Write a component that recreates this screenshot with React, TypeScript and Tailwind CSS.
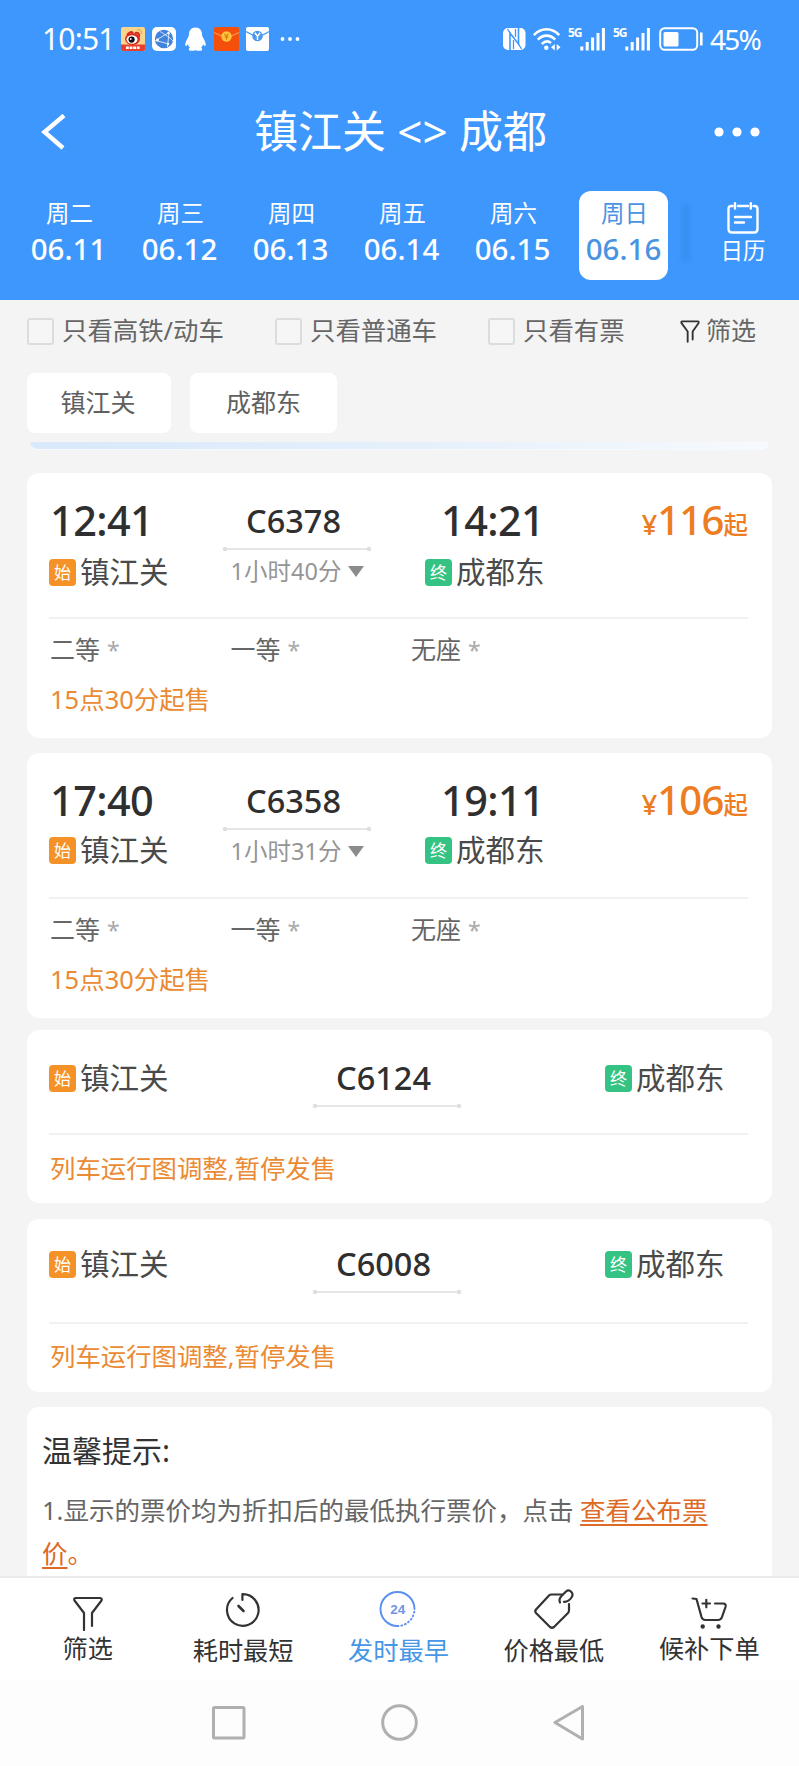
import type { ReactNode } from "react";

const days = [
  { week: "周二", date: "06.11" },
  { week: "周三", date: "06.12" },
  { week: "周四", date: "06.13" },
  { week: "周五", date: "06.14" },
  { week: "周六", date: "06.15" },
  { week: "周日", date: "06.16", active: true },
];

const trains = [
  { code: "C6378", depart: "12:41", arrive: "14:21", duration: "1小时40分", price: 116, gap: "mt-[15px]" },
  { code: "C6358", depart: "17:40", arrive: "19:11", duration: "1小时31分", price: 106, gap: "mt-[13px]" },
];

const seats = ["二等", "一等", "无座"];

function StatusBar() {
  return (
    <div className="flex h-[78px] items-center pl-[42px] pr-[39px]">
      <span className="w-[79px] text-[30px] leading-[40px] tracking-[-0.8px]">10:51</span>
      <svg width="24" height="24" viewBox="0 0 24 24">
        <rect width="24" height="24" rx="2" fill="#f8d58c" />
        <path d="M0 17.5h24V22a2 2 0 0 1-2 2H2a2 2 0 0 1-2-2z" fill="#e8402c" />
        <ellipse cx="11.5" cy="12" rx="7.5" ry="6" fill="#d9281e" />
        <path d="M6 8c2-3 5-4 6-2M14 6c3-1 5 1 4 4" stroke="#d9281e" strokeWidth="2" fill="none" />
        <ellipse cx="11" cy="12.5" rx="5.5" ry="4.2" fill="#fff" />
        <circle cx="10.6" cy="12.6" r="3.1" fill="#111" />
        <circle cx="9.8" cy="12" r="0.9" fill="#fff" />
        <path d="M16 3c3-1 5 1 4.5 4" stroke="#e8b04a" strokeWidth="1.2" fill="none" />
        <path d="M5 20.8h14" stroke="#fff" strokeWidth="2.4" strokeDasharray="2.8 .8" />
      </svg>
      <svg className="ml-[7px]" width="24" height="24" viewBox="0 0 24 24">
        <rect width="24" height="24" rx="5" fill="#fff" />
        <circle cx="12" cy="12" r="9.2" fill="#4284dc" />
        <path d="M3.5 13.5 17 5.5 15.5 20M3.5 13.5 17 17M8 4.5C12 7 19 11 21 14" stroke="#d4e6fc" strokeWidth="1" fill="none" />
        <circle cx="5.5" cy="13" r="1.4" fill="#fff" />
        <circle cx="16.5" cy="6" r="1.2" fill="#fff" />
        <circle cx="16" cy="17" r="1.2" fill="#fff" />
      </svg>
      <svg className="ml-[9px]" width="21" height="24" viewBox="0 0 21 24" fill="#fff">
        <path d="M10.5.5C6 .5 3.7 4 3.9 8.5 3.5 10.5.3 14 .3 18c0 1.6 1.2 1.2 2.7-.8.3 1.7 1 2.7 2 3.6-1.5.6-1.8 2.7.3 2.9 2 .2 4 0 5.2-.8 1.2.8 3.2 1 5.2.8 2.1-.2 1.8-2.3.3-2.9 1-.9 1.7-1.9 2-3.6 1.5 2 2.700 2.400 2.700.8 0-4-3.200-7.500-3.600-9.500C17.300 4 15 .5 10.500.5Z" />
      </svg>
      <svg className="ml-[8px]" width="25" height="24" viewBox="0 0 25 24">
        <rect width="25" height="24" rx="1.5" fill="#f4500c" />
        <path d="M0 5.5Q12.5 13 25 5.5" stroke="#f7954a" strokeWidth="1.2" fill="none" />
        <circle cx="12.5" cy="9.5" r="5.2" fill="#fdc33c" />
        <path d="m10.5 6.8 2 2.7 2-2.7M12.5 9.5v3.3M10.7 10.3h3.6" stroke="#d97a12" strokeWidth="1.1" fill="none" />
      </svg>
      <svg className="ml-[7px]" width="23" height="24" viewBox="0 0 23 24">
        <rect width="23" height="24" rx="2" fill="#fff" />
        <path d="M0 4.5Q11.5 12.5 23 4.5" stroke="#3d97fd" strokeWidth="1.3" fill="none" />
        <circle cx="11.5" cy="9" r="5.3" fill="#4b98ee" />
        <path d="m8.8 5.8 2.7 3.4 2.7-3.4M11.5 9.2v3.8" stroke="#fff" strokeWidth="1.5" fill="none" />
      </svg>
      <svg className="ml-[11px]" width="20" height="6" viewBox="0 0 20 6" fill="#fff">
        <circle cx="2.5" cy="3" r="1.9" />
        <circle cx="10" cy="3" r="1.9" />
        <circle cx="17.5" cy="3" r="1.9" />
      </svg>

      <div className="ml-auto flex items-center">
        <svg width="23" height="24" viewBox="0 0 23 24">
          <rect y="1" width="22.5" height="22" rx="5" fill="#fff" />
          <path d="M7 23V6L15.500 17V1" stroke="#3d97fd" strokeWidth="1.6" fill="none" />
          <path d="M7 6 4.500 2M15.500 17l3 5M10.500 22v-9M12.500 2v8" stroke="#3d97fd" strokeWidth="1.3" fill="none" />
        </svg>
        <svg className="ml-[7px]" width="28" height="24" viewBox="0 0 28 24" fill="none" stroke="#fff" strokeWidth="2.6">
          <path d="M.8 8.2C8 .3 19 .3 26.2 8.2M4.8 12.6C10 7.3 17 7.3 22.2 12.6M8.800 17C12 14 15.500 14 18 16" />
          <circle cx="13.3" cy="20.8" r="2.2" fill="#fff" stroke="none" />
          <path d="m21.8 17-3.8 3.2 3.8 3.2zM23.7 17l3.8 3.2-3.8 3.2z" fill="#fff" stroke="none" />
        </svg>
        <Signal />
        <Signal />
        <svg className="ml-[8px]" width="45" height="25" viewBox="0 0 45 25">
          <rect x="1.2" y="1.2" width="37" height="21.6" rx="4.5" fill="none" stroke="#fff" strokeWidth="2" />
          <rect x="4.5" y="5" width="15" height="14.5" rx="1.5" fill="#fff" />
          <path d="M42.3 5.5v13" stroke="#fff" strokeWidth="2.6" />
        </svg>
        <span className="ml-[6px] w-[50px] whitespace-nowrap text-[28px] leading-[40px] tracking-[-1.8px]">45%</span>
      </div>
    </div>
  );
}

function Signal() {
  return (
    <div className="ml-[7px] flex h-[24px] items-start">
      <span className="w-[12px] text-[12px] font-bold leading-[11px] tracking-[-1px]">5G</span>
      <svg width="26" height="24" viewBox="0 0 26 24" stroke="#fff" strokeWidth="3">
        <path d="M1.8 19.5V23.5M7.2 15V23.5M12.6 10.5V23.5M18 6V23.5M23.4 1V23.5" />
      </svg>
    </div>
  );
}

function Funnel({ className }: { className?: string }) {
  return (
    <svg className={className} viewBox="0 0 30 34" fill="none" stroke="currentColor" strokeLinecap="round" strokeLinejoin="round">
      <path d="M11.5 32.5V17L2.3 4.5Q1 2 3.5 1.8H26.5Q29 2 27.7 4.5L19 17V29" />
    </svg>
  );
}

function Checkbox({ label, className }: { label: string; className?: string }) {
  return (
    <label className={`flex items-center ${className}`}>
      <span className="size-[27px] rounded-[3px] border-2 border-[#dcdcdc] bg-[#f6f6f6]" />
      <span className="mb-[2px] ml-[8px] text-[25.4px] leading-[30px]">{label}</span>
    </label>
  );
}

function Station({ type, name }: { type: "始" | "终"; name: string }) {
  return (
    <div className="flex h-[28px] items-center whitespace-nowrap text-[29.5px] leading-[28px] text-[#4a4a4a]">
      <span className={`mr-[4px] flex size-[27px] items-center justify-center rounded-[4px] text-[17px] leading-none text-white ${type === "始" ? "bg-[#f59227]" : "bg-[#34c383]"}`}>
        {type}
      </span>
      {name}
    </div>
  );
}

function CodeLine({ code }: { code: string }) {
  return (
    <div className="flex w-[151px] flex-col">
      <span className="pl-[24px] text-[32.5px] font-medium leading-[46px] text-[#2f2f2f]">{code}</span>
      <svg className="mt-[2px]" width="151" height="6" viewBox="0 0 151 6" fill="#e4e4e4" stroke="#dedede" strokeWidth="1.5">
        <path d="M3 3h144" />
        <circle cx="3" cy="3" r="1.5" />
        <circle cx="147" cy="3" r="1.5" />
      </svg>
    </div>
  );
}

function TrainCard({ train }: { train: (typeof trains)[number] }) {
  return (
    <section className="h-[265px] rounded-[12px] bg-white pl-[22px] pr-[24px] pt-[24px]">
      <div className="flex h-[120px]">
        <div className="w-[173px]">
          <div className="pl-[1px] text-[41.5px] font-medium leading-[46px] tracking-[-0.6px] text-[#2f2f2f]">{train.depart}</div>
          <div className={train.gap}>
            <Station type="始" name="镇江关" />
          </div>
        </div>
        <div className="pt-px">
          <CodeLine code={train.code} />
          <div className="mt-[4px] flex items-center justify-center text-[23.5px] leading-[30px] text-[#959595]">
            {train.duration}
            <svg className="ml-[7px]" width="16" height="11" viewBox="0 0 16 11" fill="#8c8c8c">
              <path d="M0 0h16L8 11z" />
            </svg>
          </div>
        </div>
        <div className="ml-[52px]">
          <div className="pl-[16px] text-[41.5px] font-medium leading-[46px] tracking-[-0.6px] text-[#2f2f2f]">{train.arrive}</div>
          <div className={train.gap}>
            <Station type="终" name="成都东" />
          </div>
        </div>
        <div className="ml-auto flex h-[46px] items-end font-medium leading-none text-[#ec7d22]">
          <span className="mb-[5px] text-[27px]">¥</span>
          <span className="text-[40px] leading-[46px] tracking-[-0.8px]">{train.price}</span>
          <span className="mb-[6px] text-[24.5px]">起</span>
        </div>
      </div>
      <div className="h-[2px] bg-[#f1f1f1]" />
      <div className="mt-[15px] flex pl-px text-[25px] leading-[30px] text-[#666]">
        {seats.map((seat) => (
          <div key={seat} className="w-[180.5px]">
            {seat}
            <span className="ml-[7px] text-[23px] text-[#aaa]">*</span>
          </div>
        ))}
      </div>
      <div className="mt-[19px] pl-px text-[25.5px] leading-[30px] text-[#ea8a33]">15点30分起售</div>
    </section>
  );
}

function PausedCard({ code, top, bottom }: { code: string; top: string; bottom: string }) {
  return (
    <section className={`flex h-[173px] flex-col rounded-[12px] bg-white pl-[22px] pr-[24px] ${top}`}>
      <div className="flex items-start">
        <div className="w-[263px] pt-[9px]">
          <Station type="始" name="镇江关" />
        </div>
        <CodeLine code={code} />
        <div className="ml-[142px] pt-[9px]">
          <Station type="终" name="成都东" />
        </div>
      </div>
      <div className="mt-auto h-[2px] shrink-0 bg-[#f1f1f1]" />
      <div className={`pl-px text-[25.4px] leading-[30px] text-[#ea8a33] ${bottom}`}>列车运行图调整,暂停发售</div>
    </section>
  );
}

function Tab({ label, active, low, children }: { label: string; active?: boolean; low?: boolean; children: ReactNode }) {
  return (
    <button className={`flex w-[155.4px] flex-col items-center ${active ? "text-[#4797e6]" : "text-[#333]"}`}>
      <svg width="44" height="44" viewBox="0 0 44 44" fill="none" stroke="currentColor" strokeWidth="2.2" strokeLinecap="round" strokeLinejoin="round">
        {children}
      </svg>
      <span className={`text-[25.2px] leading-[30px] ${low ? "mt-[4px]" : "mt-[2px]"}`}>{label}</span>
    </button>
  );
}

export default function App() {
  return (
    <div className="flex h-[1766px] w-[799px] flex-col overflow-hidden bg-[#f4f4f5] font-['Noto_Sans','Noto_Sans_CJK_SC',sans-serif]">
      {/* Header */}
      <header className="h-[300px] shrink-0 bg-[#3d97fd] text-white">
        <StatusBar />
        <div className="flex h-[108px] items-center justify-between pl-[41px] pr-[39px]">
          <svg width="46" height="36" viewBox="0 0 46 36" fill="none" stroke="#fff" strokeWidth="4.4">
            <path d="M23 1.5 3.5 18 22 34" />
          </svg>
          <h1 className="pb-[2px] text-[44px] leading-[60px]">镇江关 &lt;&gt; 成都</h1>
          <svg width="46" height="10" viewBox="0 0 46 10" fill="#fff">
            <circle cx="5" cy="5" r="4.6" />
            <circle cx="23" cy="5" r="4.6" />
            <circle cx="41" cy="5" r="4.6" />
          </svg>
        </div>
        <div className="flex pl-[24px] pt-[5px]">
          <div className="flex gap-[22px]">
            {days.map((day) => (
              <div
                key={day.date}
                className={`flex h-[89px] w-[89px] flex-col items-center rounded-[12px] pt-[7px] ${day.active ? "bg-white text-[#4a93e2]" : ""}`}
              >
                <span className="pl-[2px] text-[23.5px] leading-[30px]">{day.week}</span>
                <span className="mt-[3px] text-[29.5px] font-medium leading-[36px]">{day.date}</span>
              </div>
            ))}
          </div>
          <div className="ml-[14px] mt-[13px] h-[58px] w-[8px] rounded bg-[#388ff2] blur-[2px]" />
          <div className="ml-[28px] flex w-[50px] flex-col items-center pt-[11px]">
            <svg width="32" height="32" viewBox="0 0 32 32" fill="none" stroke="#fff" strokeWidth="2.4" strokeLinecap="round">
              <path d="M5.5 4H4.5Q1.5 4 1.5 7V27Q1.5 30.5 5 30.5H27Q30.5 30.5 30.5 27V7Q30.5 4 27.5 4H26.5M11 4H21M8 1.2V6.5M23.8 1.2V6.5M8 15H24M8 20.5H17" />
            </svg>
            <span className="mt-[3px] whitespace-nowrap text-[22.5px] leading-[28px]">日历</span>
          </div>
        </div>
      </header>

      <main className="min-h-0 flex-1 overflow-hidden px-[27px]">
        {/* Filters */}
        <div className="flex h-[62px] items-center whitespace-nowrap text-[#666]">
          <Checkbox label="只看高铁/动车" className="w-[248px]" />
          <Checkbox label="只看普通车" className="w-[213px]" />
          <Checkbox label="只看有票" className="w-[192px]" />
          <Funnel className="h-[23px] w-[20px] stroke-[2.8] text-[#333]" />
          <span className="mb-[2px] ml-[6px] text-[25px] leading-[30px]">筛选</span>
        </div>
        <div className="mt-[11px] flex gap-[19px] text-[25px] leading-[58px] text-[#606060]">
          <span className="h-[60px] w-[144px] rounded-[8px] bg-white pr-[2px] text-center">镇江关</span>
          <span className="h-[60px] w-[147px] rounded-[8px] bg-white text-center">成都东</span>
        </div>
        <div className="mx-[3px] mt-[9px] h-[8px] rounded-b-[8px] border-b border-[#f5faff] bg-linear-to-r from-[#d8e9fb] via-[#e4effb] to-[#f7fafd]" />

        {/* Trains */}
        <div className="mt-[23px] flex flex-col gap-[15px]">
          {trains.map((train) => (
            <TrainCard key={train.code} train={train} />
          ))}
        </div>
        <div className="mt-[12px] flex flex-col gap-[16px]">
          <PausedCard code="C6124" top="pt-[25px]" bottom="mt-[18px] mb-[20px]" />
          <PausedCard code="C6008" top="pt-[22px]" bottom="mt-[17px] mb-[21px]" />
        </div>

        {/* Tips */}
        <section className="mt-[15px] h-[300px] whitespace-nowrap rounded-t-[12px] bg-white pl-[15px] pt-[24px]">
          <h2 className="text-[30px] leading-[40px] text-[#333]">温馨提示:</h2>
          <div className="mt-[18px] text-[25.5px] leading-[43px] text-[#666]">
            <p>
              1.显示的票价均为折扣后的最低执行票价，点击{" "}
              <a className="text-[#dd6a26] underline decoration-2 underline-offset-[4px]">查看公布票</a>
            </p>
            <p className="text-[#dd6a26]">
              <a className="underline decoration-2 underline-offset-[4px]">价</a>。
            </p>
          </div>
        </section>
      </main>

      {/* Sort tabs */}
      <nav className="flex h-[104px] shrink-0 border-t-2 border-[#ebebeb] bg-white pl-[10px] pt-[9px]">
        <Tab label="筛选">
          <path d="M18 43V26L8.5 13.5Q7.5 11 10 11H33.5Q36.5 11 35.5 13.5L26 26V39" />
        </Tab>
        <Tab label="耗时最短" low>
          <path d="M21.4 13V7.2A15.8 15.8 0 1 1 11.5 11" />
          <path d="M17.5 19 22.5 24" strokeWidth="2.6" />
        </Tab>
        <Tab label="发时最早" active low>
          <path d="M38.5 22A17 17 0 1 0 21.5 39" stroke="#5b8ff0" strokeWidth="1.9" />
          <path d="M21.5 39A17 17 0 0 0 38.5 22" stroke="#5b8ff0" strokeWidth="1.9" strokeDasharray="1 2.8" />
          <text x="21.7" y="27" textAnchor="middle" fontSize="13.5" fontWeight="700" fontFamily="Liberation Sans, sans-serif" fill="#7096e6" stroke="none">24</text>
        </Tab>
        <Tab label="价格最低" low>
          <path d="M30 7.5H19.5Q18 7.5 17 8.5L4 22.5Q2.5 24.5 4 26L18 40Q20 41.5 22 40L36 26Q37 25 37 23.5V17" />
          <path d="M28 15.5C26.5 12.5 28 10.5 30 8.5L34 4.5C37.5 1.5 42.5 6 39.5 10.5C37.5 13.5 35 15 32 14.8" />
        </Tab>
        <Tab label="候补下单">
          <path d="M5.5 11.5 9.5 12 14.5 30Q15.5 33 18.5 33H31Q34 33 35 30L38.5 20Q39.5 16.5 36 16.5H28M15.5 16.5H23M19.3 12.8V20.3" />
          <circle cx="15.7" cy="39.5" r="1.1" fill="currentColor" />
          <circle cx="31.5" cy="39.5" r="1.1" fill="currentColor" />
        </Tab>
      </nav>

      {/* System navigation */}
      <footer className="flex h-[86px] shrink-0 items-center bg-[#fdfdfd] pl-[210px]">
        <svg width="376" height="40" viewBox="0 0 376 40" fill="none" stroke="#b0b0b0" strokeWidth="3" strokeLinejoin="round">
          <rect x="3.5" y="4.5" width="30.5" height="30.5" rx="1" />
          <circle cx="189.5" cy="19.5" r="16.8" />
          <path d="M345 19.5 372.5 3.5V36Z" />
        </svg>
      </footer>
    </div>
  );
}
